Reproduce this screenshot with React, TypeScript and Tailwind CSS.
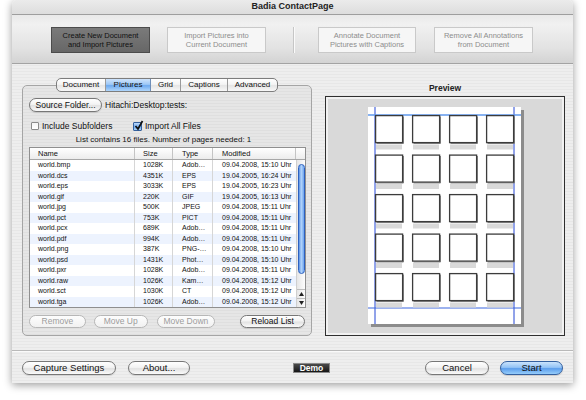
const files = [
  ["world.bmp", "1028K", "Adob…", "09.04.2008, 15:10 Uhr"],
  ["world.dcs", "4351K", "EPS", "19.04.2005, 16:24 Uhr"],
  ["world.eps", "3033K", "EPS", "19.04.2005, 16:23 Uhr"],
  ["world.gif", "220K", "GIF", "19.04.2005, 16:13 Uhr"],
  ["world.jpg", "500K", "JPEG", "09.04.2008, 15:11 Uhr"],
  ["world.pct", "753K", "PICT", "09.04.2008, 15:11 Uhr"],
  ["world.pcx", "689K", "Adob…", "09.04.2008, 15:11 Uhr"],
  ["world.pdf", "994K", "Adob…", "09.04.2008, 15:11 Uhr"],
  ["world.png", "387K", "PNG-…", "09.04.2008, 15:10 Uhr"],
  ["world.psd", "1431K", "Phot…", "09.04.2008, 15:10 Uhr"],
  ["world.pxr", "1028K", "Adob…", "09.04.2008, 15:11 Uhr"],
  ["world.raw", "1026K", "Kam…", "09.04.2008, 15:12 Uhr"],
  ["world.sct", "1030K", "CT", "09.04.2008, 15:12 Uhr"],
  ["world.tga", "1026K", "Adob…", "09.04.2008, 15:12 Uhr"],
];

const pill =
  "flex items-center justify-center rounded-full border border-[#777] bg-[linear-gradient(to_bottom,#ffffff,#f3f3f3_45%,#e2e2e2_55%,#fafafa)] text-[#111] shadow-[0_1px_1px_rgba(0,0,0,0.12)]";
const pillDisabled =
  "flex items-center justify-center rounded-full border border-[#b7b7b7] bg-[linear-gradient(to_bottom,#fdfdfd,#f1f1f1)] text-[#9c9c9c]";

const PagePreview = () => {
  const cols = [7, 44, 81, 118];
  const rowTops = [8, 47.5, 87, 126.5, 166];
  return (
    <svg width="157" height="221" viewBox="0 0 157 221">
      <rect x="3" y="3" width="153" height="217" fill="#8c8c8c" />
      <rect x="0" y="0" width="153" height="217" fill="#ffffff" />
      <line x1="7" y1="0" x2="7" y2="217" stroke="#2547d4" strokeWidth="1" />
      <line x1="146" y1="0" x2="146" y2="217" stroke="#2547d4" strokeWidth="1" />
      <line x1="0" y1="8" x2="153" y2="8" stroke="#5f98ec" strokeWidth="1.3" />
      <line x1="0" y1="201" x2="153" y2="201" stroke="#3a66e0" strokeWidth="1.2" />
      {rowTops.map((y) =>
        cols.map((x) => (
          <g key={`${x}-${y}`}>
            <rect x={x + 1} y={y + 29.5} width="26" height="5" fill="#d9d9d9" />
            <path d={`M${x + 28.5} ${y + 1.5} V${y + 28.5} H${x + 1.5}`} fill="none" stroke="#8a8a8a" strokeWidth="1" />
            <rect x={x + 0.6} y={y + 0.6} width="27" height="27" fill="#ffffff" stroke="#3c3c3c" strokeWidth="1.3" />
          </g>
        ))
      )}
    </svg>
  );
};

export default function App() {
  return (
    <div className="h-[400px] w-[586px] overflow-hidden bg-white font-['Liberation_Sans',Arial,sans-serif] text-[#111]">
      <div className="ml-[12px] flex h-[383px] w-[561px] flex-col overflow-hidden rounded-t-[5px] bg-[repeating-linear-gradient(to_bottom,#eeeeee_0px,#eeeeee_2px,#e7e7e7_2px,#e7e7e7_3px)] shadow-[0_2px_8px_rgba(0,0,0,0.4)]">
        {/* Title bar */}
        <div className="flex h-[15px] items-center justify-center border-b border-[#9e9e9e] bg-[linear-gradient(to_bottom,#ebebeb,#dddddd)] text-[9px] font-bold text-[#222]">
          Badia ContactPage
        </div>

        {/* Toolbar */}
        <div className="flex h-[49px] items-center border-b border-[#a3a3a3] bg-[linear-gradient(to_bottom,#e9e9e9,#f1f1f1_20%,#e2e2e2_70%,#d3d3d3)] pl-[39px] pt-[1px] text-[7.5px] leading-[9px]">
          <div className="flex h-[26px] w-[99px] items-center justify-center border border-[#4c4c4c] bg-[linear-gradient(to_bottom,#7a7a7a,#676767)] text-center text-[#111]">
            Create New Document
            <br />
            and Import Pictures
          </div>
          <div className="ml-[17px] flex h-[26px] w-[99px] items-center justify-center border border-[#c9c9c9] bg-[#f6f6f6] text-center text-[#8d8d8d]">
            Import Pictures into
            <br />
            Current Document
          </div>
          <div className="ml-[27px] h-[26px] w-[2px] border-l border-[#c6c6c6] bg-[#fafafa]" />
          <div className="ml-[23px] flex h-[26px] w-[98px] items-center justify-center border border-[#c9c9c9] bg-[#f6f6f6] text-center text-[#8d8d8d]">
            Annotate Document
            <br />
            Pictures with Captions
          </div>
          <div className="ml-[18px] flex h-[26px] w-[99px] items-center justify-center border border-[#c9c9c9] bg-[#f6f6f6] text-center text-[#8d8d8d]">
            Remove All Annotations
            <br />
            from Document
          </div>
        </div>

        {/* Main */}
        <div className="flex h-[286px]">
          {/* Tab view */}
          <div className="ml-[10px] w-[290px] pt-[14px]">
            <div className="relative z-10 mx-auto flex h-[14px] w-[222px] overflow-hidden rounded-[5px] border border-[#7d7d7d] bg-[linear-gradient(to_bottom,#ffffff,#f4f4f4_45%,#e5e5e5_55%,#f8f8f8)] text-[8px] leading-[12px]">
              <div className="flex w-[49px] items-center justify-center border-r border-[#9a9a9a]">Document</div>
              <div className="flex w-[45px] items-center justify-center border-r border-[#6f8fb8] bg-[linear-gradient(to_bottom,#cfe4fc,#9ec8f6_45%,#6eaaf0_55%,#b0d6fb)]">
                Pictures
              </div>
              <div className="flex w-[30px] items-center justify-center border-r border-[#9a9a9a]">Grid</div>
              <div className="flex w-[47px] items-center justify-center border-r border-[#9a9a9a]">Captions</div>
              <div className="flex w-[49px] items-center justify-center">Advanced</div>
            </div>

            <div className="-mt-[7px] h-[251px] rounded-[5px] border border-[#a5a5a5] bg-[repeating-linear-gradient(to_bottom,#e6e6e6_0px,#e6e6e6_2px,#dfdfdf_2px,#dfdfdf_3px)] px-[6px] pt-[12px]">
              <div className="flex h-[14px] items-center text-[8.5px]">
                <div className={`${pill} h-[14px] w-[73px]`}>Source Folder...</div>
                <span className="ml-[3px]">Hitachi:Desktop:tests:</span>
              </div>

              <div className="mt-[9px] flex h-[10px] items-center pl-[2px] text-[8.5px]">
                <div className="flex w-[102px] items-center">
                  <div className="h-[8px] w-[8px] rounded-[1px] border border-[#8a8a8a] bg-[linear-gradient(to_bottom,#f4f4f4,#ffffff)]" />
                  <span className="ml-[3px]">Include Subfolders</span>
                </div>
                <div className="relative h-[9px] w-[9px] rounded-[1px] border border-[#34609e] bg-[linear-gradient(to_bottom,#bcd9fb,#6ea9ef_55%,#a6d0fb)]">
                  <svg className="absolute -top-[3px] left-[0px]" width="10" height="11" viewBox="0 0 10 11">
                    <path d="M1.5 6 L4 9 L8.5 1" fill="none" stroke="#111" strokeWidth="1.7" />
                  </svg>
                </div>
                <span className="ml-[3px]">Import All Files</span>
              </div>

              <div className="mt-[4px] h-[10px] pr-[7px] text-center text-[8px] leading-[10px]">
                List contains 16 files. Number of pages needed: 1
              </div>

              {/* File list */}
              <div className="mt-[2px] w-[277px] border border-[#8f8f8f] bg-white">
                <div className="flex h-[12px] border-b border-[#a7a7a7] bg-[linear-gradient(to_bottom,#ffffff,#ececec)] text-[7.5px]">
                  <div className="flex w-[105px] items-center border-r border-[#c4c4c4] pl-[8px]">Name</div>
                  <div className="flex w-[38px] items-center border-r border-[#c4c4c4] pl-[8px]">Size</div>
                  <div className="flex w-[40px] items-center border-r border-[#c4c4c4] pl-[9px]">Type</div>
                  <div className="flex w-[83px] items-center border-r border-[#c4c4c4] pl-[9px]">Modified</div>
                  <div className="w-[9px]" />
                </div>
                <div className="flex">
                  <div className="w-[266px]">
                    {files.map((f, i) => (
                      <div
                        key={f[0]}
                        className={`flex h-[10.5px] text-[7px] leading-[10.5px] ${i % 2 === 1 ? "bg-[#edf3fe]" : "bg-white"}`}
                      >
                        <div className="w-[105px] border-r border-[#d6d6d6] pl-[8px]">{f[0]}</div>
                        <div className="w-[38px] border-r border-[#d6d6d6] pl-[8px]">{f[1]}</div>
                        <div className="w-[40px] border-r border-[#d6d6d6] pl-[9px]">{f[2]}</div>
                        <div className="w-[83px] pl-[9px]">{f[3]}</div>
                      </div>
                    ))}
                  </div>
                  {/* Scrollbar */}
                  <div className="flex h-[147px] w-[9px] flex-col items-center border-l border-[#cfcfcf] bg-[linear-gradient(to_right,#e6e6e6,#fdfdfd)]">
                    <div className="mt-[4px] h-[110px] w-[7px] rounded-full border border-[#2d61c0] bg-[linear-gradient(to_right,#5790e6,#b4d5fa_45%,#6ea4ef)]" />
                    <div className="flex-1" />
                    <div className="flex h-[9px] w-full items-center justify-center border-t border-[#bdbdbd]">
                      <svg width="5" height="4" viewBox="0 0 5 4">
                        <path d="M2.5 0 L5 4 L0 4 Z" fill="#222" />
                      </svg>
                    </div>
                    <div className="flex h-[9px] w-full items-center justify-center border-t border-[#bdbdbd]">
                      <svg width="5" height="4" viewBox="0 0 5 4">
                        <path d="M0 0 L5 0 L2.5 4 Z" fill="#222" />
                      </svg>
                    </div>
                  </div>
                </div>
              </div>

              <div className="mt-[7px] flex h-[13px] text-[8.5px]">
                <div className={`${pillDisabled} h-[13px] w-[57px]`}>Remove</div>
                <div className={`${pillDisabled} ml-[8px] h-[13px] w-[54px]`}>Move Up</div>
                <div className={`${pillDisabled} ml-[9px] h-[13px] w-[59px]`}>Move Down</div>
                <div className={`${pill} ml-[25px] h-[13px] w-[65px]`}>Reload List</div>
              </div>
            </div>
          </div>

          {/* Preview */}
          <div className="ml-[13px] w-[240px] pt-[18px]">
            <div className="h-[12px] text-center text-[8.5px] font-bold leading-[12px] text-[#222]">Preview</div>
            <div className="mt-[2px] h-[240px] border border-[#2f2f2f] bg-[#f1f1f1] p-[2px]">
              <div className="h-full bg-[#d9d9d9] pl-[40px] pt-[8px]">
                <PagePreview />
              </div>
            </div>
          </div>
        </div>

        {/* Bottom bar */}
        <div className="flex h-[33px] items-start border-t border-[#b9b9b9] pl-[10px] pt-[10px] text-[9.5px] shadow-[inset_0_1px_0_#fafafa]">
          <div className={`${pill} h-[14px] w-[94px]`}>Capture Settings</div>
          <div className={`${pill} ml-[12px] h-[14px] w-[62px]`}>About...</div>
          <div className="ml-[103px] mt-[2px] flex h-[10px] w-[37px] items-center justify-center border border-[#8a8a8a] bg-[linear-gradient(to_bottom,#4a4a4a,#161616)] text-[8.5px] font-bold text-white">
            Demo
          </div>
          <div className={`${pill} ml-[95px] h-[14px] w-[64px]`}>Cancel</div>
          <div className="ml-[11px] flex h-[14px] w-[63px] items-center justify-center rounded-full border border-[#34609f] bg-[linear-gradient(to_bottom,#cae3fc,#93c3f6_45%,#5d9eec_55%,#95cdfb)] text-[#111] shadow-[0_1px_1px_rgba(0,0,0,0.15)]">
            Start
          </div>
        </div>
      </div>
    </div>
  );
}
